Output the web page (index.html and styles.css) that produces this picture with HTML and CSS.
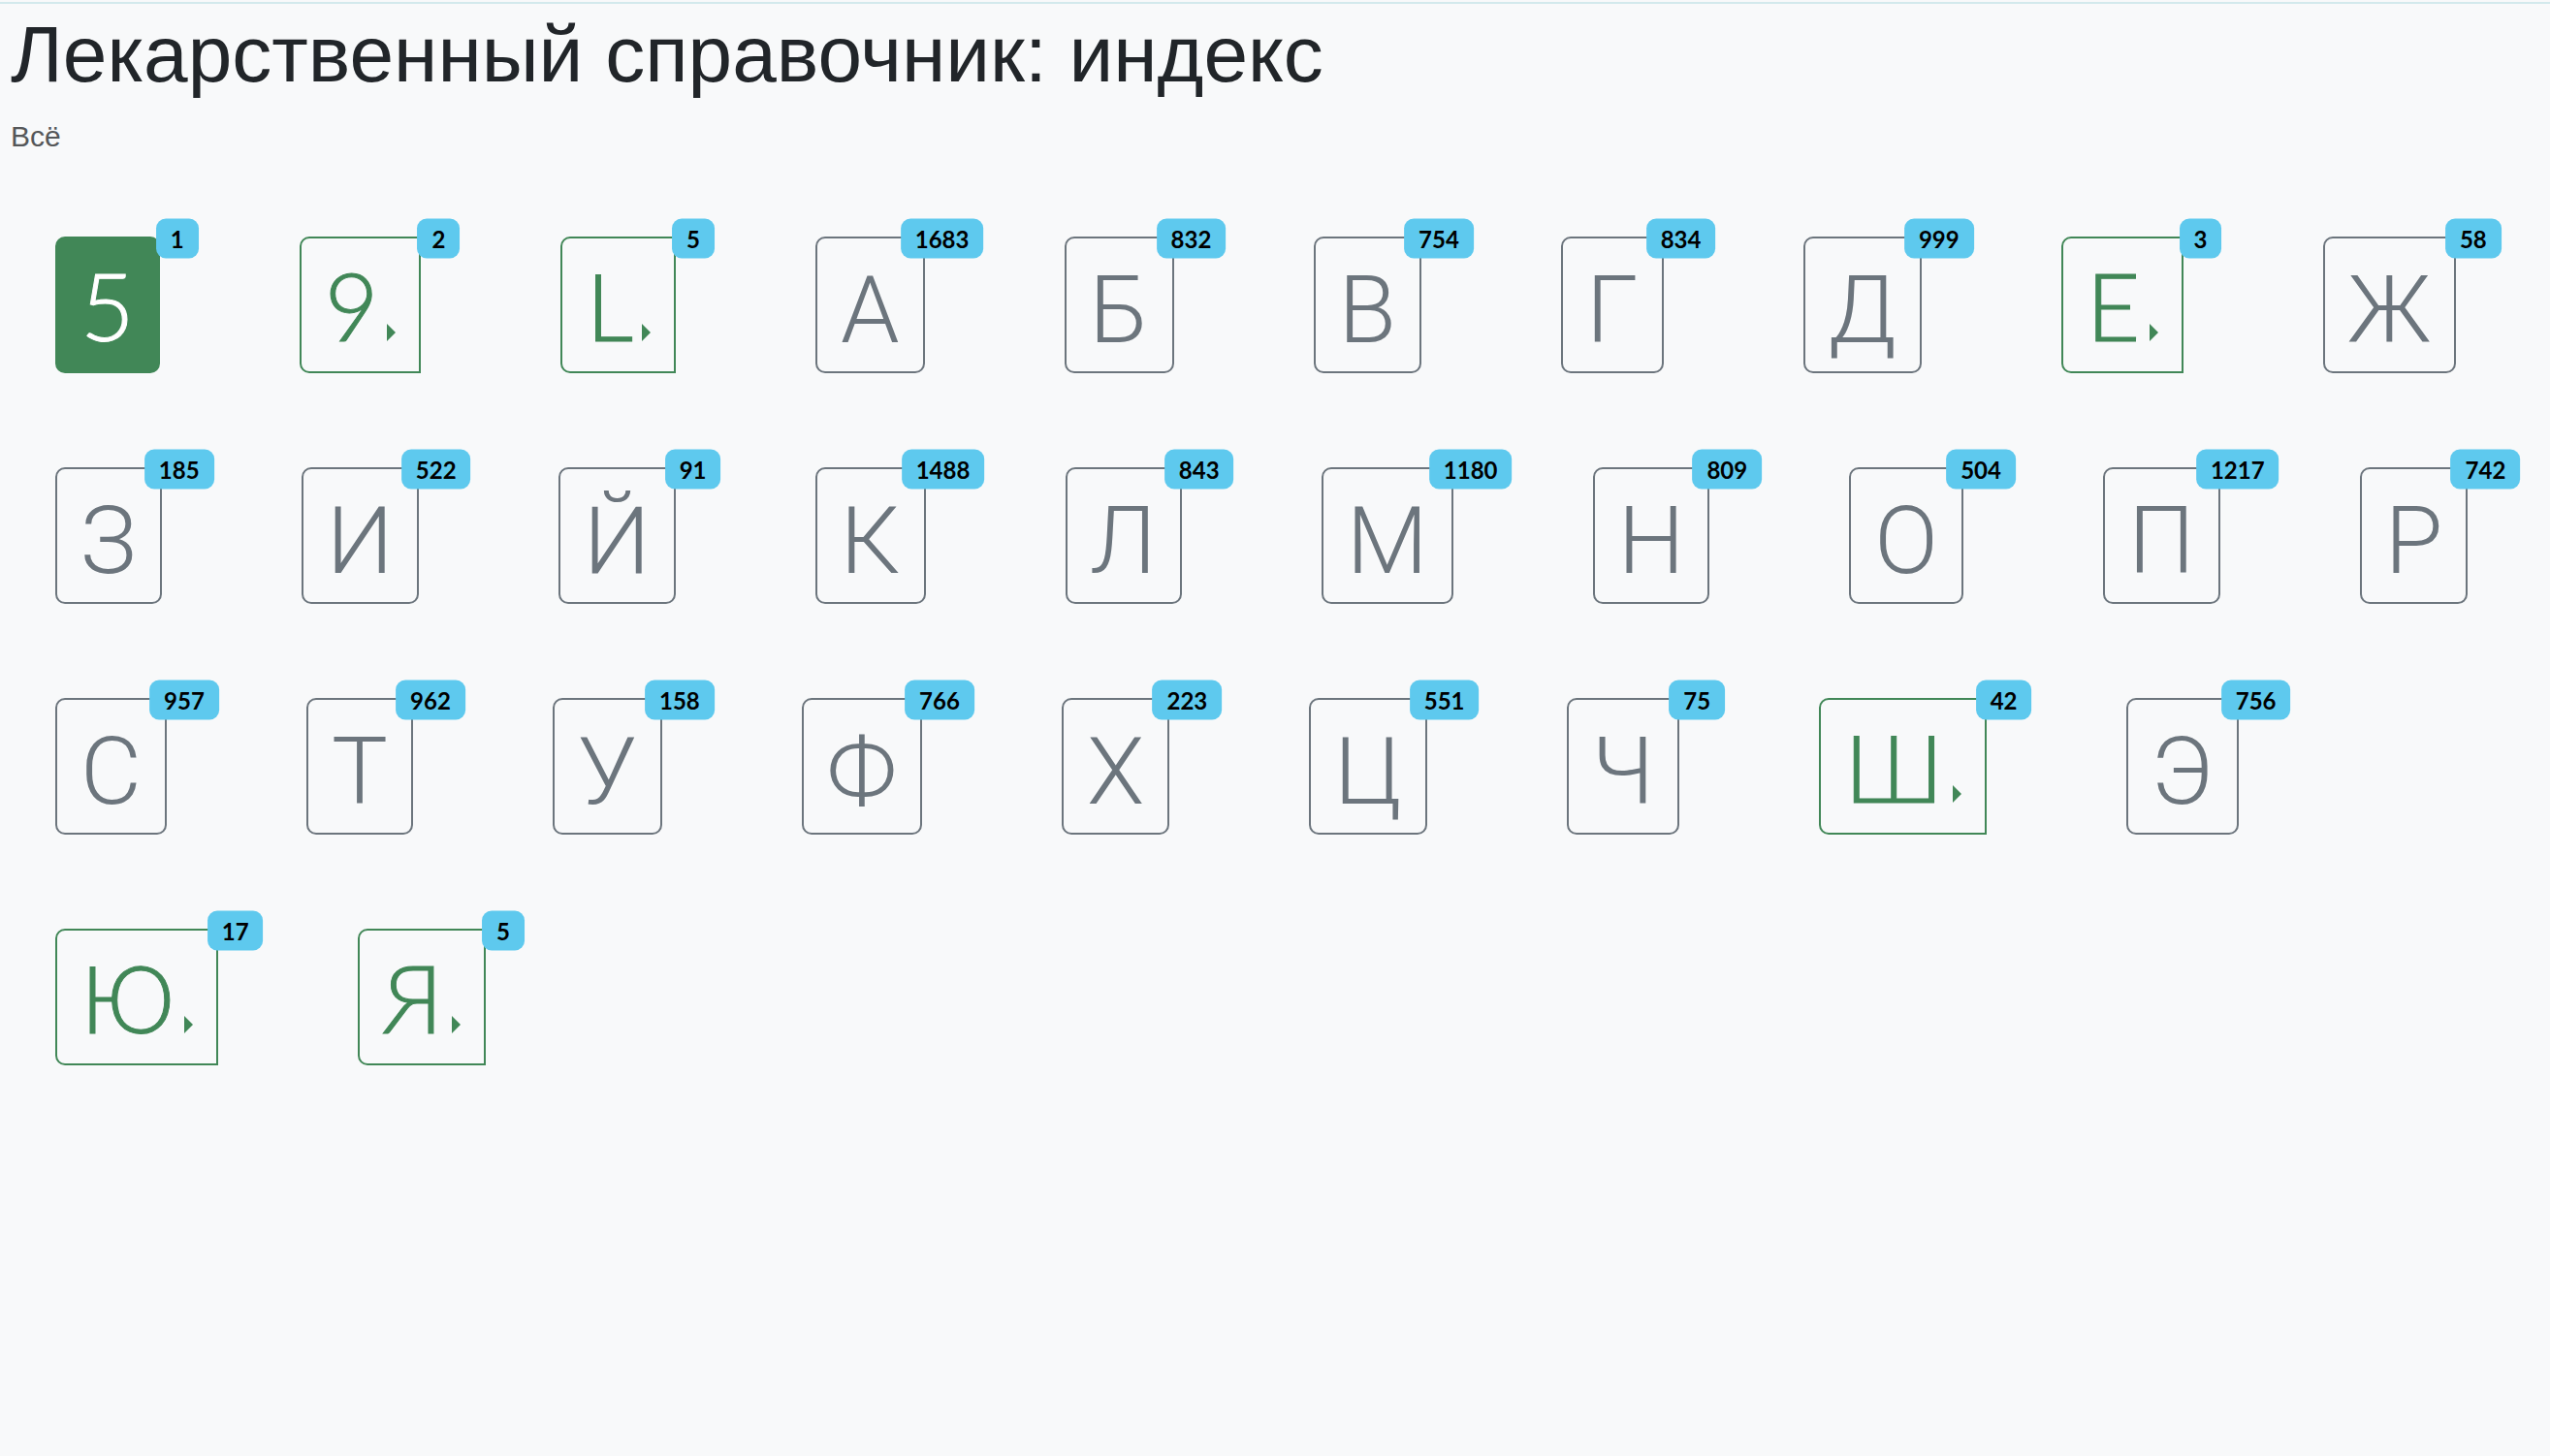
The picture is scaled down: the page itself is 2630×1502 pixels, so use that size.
FILE: index.html
```html
<!DOCTYPE html>
<html lang="ru">
<head>
<meta charset="utf-8">
<title>Лекарственный справочник: индекс</title>
<link rel="stylesheet" href="styles.css">
</head>
<body>
<div class="topline"></div>
<main class="page">
  <h1 class="title">Лекарственный справочник: индекс</h1>
  <div class="crumbs"><a class="crumb">Всё</a></div>
  <div class="index">
    <div class="row">
      <div class="item"><a class="tile tile-active">5</a><span class="badge">1</span></div>
      <div class="item"><a class="tile tile-green">9<span class="caret"></span></a><span class="badge">2</span></div>
      <div class="item"><a class="tile tile-green">L<span class="caret"></span></a><span class="badge">5</span></div>
      <div class="item"><a class="tile">А</a><span class="badge">1683</span></div>
      <div class="item"><a class="tile">Б</a><span class="badge">832</span></div>
      <div class="item"><a class="tile">В</a><span class="badge">754</span></div>
      <div class="item"><a class="tile">Г</a><span class="badge">834</span></div>
      <div class="item"><a class="tile">Д</a><span class="badge">999</span></div>
      <div class="item"><a class="tile tile-green">Е<span class="caret"></span></a><span class="badge">3</span></div>
      <div class="item"><a class="tile">Ж</a><span class="badge">58</span></div>
    </div>
    <div class="row">
      <div class="item"><a class="tile">З</a><span class="badge">185</span></div>
      <div class="item"><a class="tile">И</a><span class="badge">522</span></div>
      <div class="item"><a class="tile">Й</a><span class="badge">91</span></div>
      <div class="item"><a class="tile">К</a><span class="badge">1488</span></div>
      <div class="item"><a class="tile">Л</a><span class="badge">843</span></div>
      <div class="item"><a class="tile">М</a><span class="badge">1180</span></div>
      <div class="item"><a class="tile">Н</a><span class="badge">809</span></div>
      <div class="item"><a class="tile">О</a><span class="badge">504</span></div>
      <div class="item"><a class="tile">П</a><span class="badge">1217</span></div>
      <div class="item"><a class="tile">Р</a><span class="badge">742</span></div>
    </div>
    <div class="row">
      <div class="item"><a class="tile">С</a><span class="badge">957</span></div>
      <div class="item"><a class="tile">Т</a><span class="badge">962</span></div>
      <div class="item"><a class="tile">У</a><span class="badge">158</span></div>
      <div class="item"><a class="tile">Ф</a><span class="badge">766</span></div>
      <div class="item"><a class="tile">Х</a><span class="badge">223</span></div>
      <div class="item"><a class="tile">Ц</a><span class="badge">551</span></div>
      <div class="item"><a class="tile">Ч</a><span class="badge">75</span></div>
      <div class="item"><a class="tile tile-green">Ш<span class="caret"></span></a><span class="badge">42</span></div>
      <div class="item"><a class="tile">Э</a><span class="badge">756</span></div>
    </div>
    <div class="row">
      <div class="item"><a class="tile tile-green">Ю<span class="caret"></span></a><span class="badge">17</span></div>
      <div class="item"><a class="tile tile-green">Я<span class="caret"></span></a><span class="badge">5</span></div>
    </div>
  </div>
</main>
</body>
</html>
```

FILE: styles.css
```css
html, body {
  margin: 0;
  background: #f8f9fa;
}

body {
  font-family: "Liberation Sans", Arial, sans-serif;
  color: #212529;
}

.topline {
  height: 2px;
  margin-top: 2px;
  background: #d3e9ec;
}

.page {
  padding: 0 11px;
}

.title {
  margin: 3px 0 0;
  font-size: 82px;
  font-weight: 400;
  line-height: 1.2;
  color: #212529;
}

.crumbs {
  margin-top: 13px;
  font-size: 30px;
  line-height: 1.5;
}

.crumb {
  color: #555759;
  text-decoration: none;
}

.index {
  display: flex;
  flex-direction: column;
  row-gap: 97px;
  margin-top: 81px;
  padding-left: 46px;
}

.row {
  display: flex;
  column-gap: 126px;
}

.item {
  position: relative;
  display: flex;
  padding-right: 18px;
}

.tile {
  box-sizing: border-box;
  height: 141px;
  padding: 12px 24px 0;
  border: 2px solid #6c757d;
  border-radius: 10px;
  font-family: Roboto, "Liberation Sans", sans-serif;
  font-weight: 300;
  font-size: 97px;
  line-height: 125px;
  color: #6c757d;
  white-space: nowrap;
  text-decoration: none;
}

.tile-green,
.tile-active {
  padding-top: 0;
  font-family: Lato, "Liberation Sans", sans-serif;
  font-weight: 300;
  font-size: 96px;
  line-height: 137px;
  -webkit-text-stroke: 1px currentColor;
}

.tile-green {
  border-color: #418757;
  color: #418757;
  border-radius: 10px 0 0 10px;
}

.tile-active {
  border-color: #418757;
  background: #418757;
  color: #ffffff;
}

.caret {
  display: inline-block;
  margin-left: 9px;
  border-left: 9px solid currentColor;
  border-top: 9px solid transparent;
  border-bottom: 9px solid transparent;
}

.badge {
  position: absolute;
  left: 100%;
  top: 2px;
  transform: translate(-50%, -50%);
  height: 41px;
  padding: 0 15px;
  border-radius: 10px;
  background: #5ec9ee;
  color: #000000;
  font-family: Lato, "Liberation Sans", sans-serif;
  font-weight: 700;
  font-size: 24px;
  line-height: 41px;
  white-space: nowrap;
  -webkit-text-stroke: 0;
}
```
